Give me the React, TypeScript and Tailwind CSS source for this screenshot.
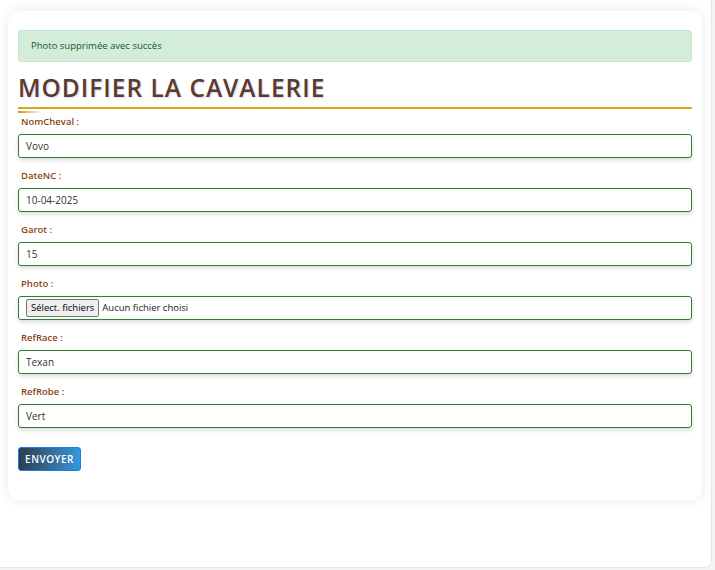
const fields = [
  { label: "NomCheval :", value: "Vovo" },
  { label: "DateNC :", value: "10-04-2025" },
  { label: "Garot :", value: "15" },
  { label: "Photo :", file: true },
  { label: "RefRace :", value: "Texan" },
  { label: "RefRobe :", value: "Vert" },
];

export default function App() {
  return (
    <div className="w-[715px] h-[570px] bg-[#f4f4f4] font-['Open_Sans',sans-serif]">
      <div className="w-[712px] h-[568px] bg-white rounded-br-lg border-r border-b border-[#e6e6e6] pt-[11px] pl-[8px]">
        <div className="w-[694px] h-[489px] bg-white rounded-xl shadow-[0_0_14px_rgba(0,0,0,0.09)] px-[10px] pt-[19px]">
          {/* Alert */}
          <div className="h-[32px] flex items-center pl-[12px] bg-[#d4edda] border border-[#c3e6cb] rounded-[3px] text-[9.5px] text-[#155724]">
            Photo supprimée avec succès
          </div>

          {/* Title */}
          <h1 className="mt-[9px] h-[38px] leading-[34px] text-[24.5px] font-semibold tracking-[1px] text-[#5c3a2c] border-b-2 border-[#daa520] [text-shadow:1px_1px_2px_rgba(70,90,200,0.25)]">
            MODIFIER LA CAVALERIE
          </h1>
          <div className="mt-[2px] h-[2px] w-[24px] bg-gradient-to-r from-[#c8961e] to-transparent" />

          {/* Form */}
          <div className="flex flex-col gap-[10px] pt-[1px]">
            {fields.map((f) => (
              <div key={f.label}>
                <div className="pl-[3px] h-[14px] pt-[1px] leading-[14px] text-[9.5px] font-semibold text-[#8b4513] mb-[6px]">
                  {f.label}
                </div>
                {f.file ? (
                  <div className="h-[24px] flex items-center pl-[7px] border border-[#2e7d32] rounded-[3px] shadow-[0_2px_4px_rgba(0,0,0,0.15)] text-[9.5px] text-[#222]">
                    <span className="h-[18px] px-[4px] flex items-center bg-[#efefef] border border-[#767676] rounded-[2px] text-black">
                      Sélect. fichiers
                    </span>
                    <span className="ml-[3px]">Aucun fichier choisi</span>
                  </div>
                ) : (
                  <div className="h-[24px] flex items-center pl-[7px] border border-[#2e7d32] rounded-[3px] shadow-[0_2px_4px_rgba(0,0,0,0.15)] text-[10px] text-[#333]">
                    {f.value}
                  </div>
                )}
              </div>
            ))}
          </div>

          <button className="mt-[19px] h-[24px] w-[63px] flex items-center justify-center rounded-[3px] border border-[#1e7ae0] bg-gradient-to-r from-[#2c3e50] to-[#3498db] text-white text-[10px] font-semibold tracking-[0.5px]">
            ENVOYER
          </button>
        </div>
      </div>
    </div>
  );
}
